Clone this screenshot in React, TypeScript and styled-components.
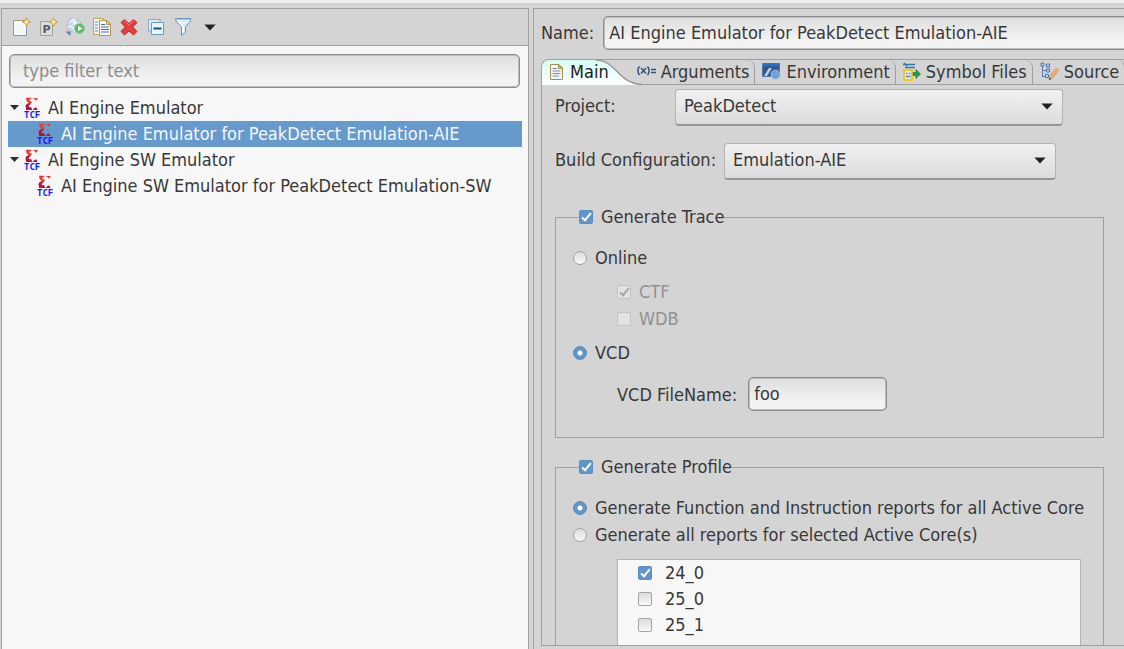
import React from "react";
import styled, { createGlobalStyle, css } from "styled-components";

const FONT = '"DejaVu Sans Condensed", "DejaVu Sans", "Liberation Sans", sans-serif';
const LINE = "#a0a0a0";
const FACE = "#d4d4d4";
const INK = "#383838";

const GlobalStyle = createGlobalStyle`
  *, *::before, *::after { box-sizing: border-box; }
  body { margin: 0; background: ${FACE}; }
  body, button, input, select { font-family: ${FONT}; font-size: 18px; color: ${INK}; }
`;

const Shell = styled.div`
  height: 100vh;
  overflow: hidden;
  display: grid;
  grid-template-columns: 528fr 591fr;
  gap: 4px;
  padding: 5px 0 0 1px;
  border-top: 3px solid #efefef;
  background: ${FACE};
`;

const LeftPane = styled.aside`
  display: flex;
  flex-direction: column;
  min-width: 0;
  background: #f7f7f7;
  border: 1px solid ${LINE};
  border-bottom: 0;
`;

const Toolbar = styled.div`
  display: flex;
  align-items: center;
  height: 37px;
  padding-left: 5px;
  background: ${FACE};
  border-bottom: 1px solid ${LINE};
`;

const ToolButton = styled.button`
  display: flex;
  align-items: center;
  justify-content: center;
  width: 27px;
  height: 28px;
  padding: 0;
  border: 0;
  background: none;
`;

const TextField = styled.input`
  height: 34px;
  min-width: 0;
  padding: 0 5px 1px;
  border: 1px solid #8c8c8c;
  border-radius: 5px;
  background: linear-gradient(#dedede, #f3f3f3 75%);
  box-shadow: inset 0 0 0 1px #bdbdbd;
  outline: 0;
`;

const FilterField = styled(TextField)`
  margin: 8px 8px 7px 7px;
  padding: 0 13px 2px;
  &::placeholder { color: #8c8c8c; opacity: 1; }
`;

const Tree = styled.ul`
  margin: 0 6px;
  padding: 0;
  list-style: none;
`;

const TreeRow = styled.li<{ $child?: boolean; $selected?: boolean }>`
  display: flex;
  align-items: center;
  height: 26px;
  padding-bottom: 1px;
  padding-left: ${(p) => (p.$child ? 29 : 1)}px;
  white-space: nowrap;
  ${(p) => p.$selected && css`background: #6699cc; color: #f4f8fc;`}
`;

const Twisty = styled.svg`
  width: 11px;
  height: 7px;
  margin-right: 4px;
  flex: none;
`;

const TreeIcon = styled.svg`
  width: 18px;
  height: 21px;
  margin-right: 6px;
  flex: none;
`;

const RightPane = styled.main`
  display: flex;
  flex-direction: column;
  min-width: 0;
  overflow: hidden;
  padding: 7px 0 3px 7px;
  border: 1px solid ${LINE};
  border-width: 1px 0 0 1px;
`;

const NameRow = styled.div`
  display: flex;
  align-items: center;
  gap: 9px;
  margin-bottom: 9px;
  label { flex: none; padding-bottom: 2px; }
  input { flex: 1; margin-right: -8px; }
`;

const Folder = styled.section`
  display: flex;
  flex-direction: column;
  flex: 1;
  min-height: 0;
  border: 1px solid ${LINE};
  border-right: 0;
  border-radius: 8px 0 0 0;
  overflow: hidden;
`;

const Tabs = styled.div`
  display: flex;
  flex: none;
  height: 25px;
  border-bottom: 1px solid ${LINE};
`;

const Tab = styled.button<{ $active?: boolean }>`
  position: relative;
  display: flex;
  flex: none;
  align-items: center;
  gap: 5px;
  height: 24px;
  padding: 0 5px 2px 7px;
  border: 0;
  border-right: 1px solid ${LINE};
  border-radius: 0 8px 0 0;
  background: none;
  white-space: nowrap;
  ${(p) =>
    p.$active &&
    css`
      gap: 6px;
      height: 25px;
      padding-right: 20px;
      border: 0;
      color: #1c1c1c;
      background: linear-gradient(#d6fdf5, #ffffff);
    `}
  & > svg { position: relative; flex: none; }
  & > span { position: relative; }
`;

const CurveBox = styled.div`
  position: absolute;
  top: 0;
  right: -13px;
  width: 46px;
  height: 25px;
  svg { display: block; }
`;

const TabBody = styled.div`
  flex: 1;
  min-height: 0;
  overflow: hidden;
  padding: 4px 20px 0 13px;
`;

const FieldRow = styled.div`
  display: flex;
  align-items: center;
  margin-bottom: 17px;
`;

const FieldLabel = styled.label<{ $wide?: boolean }>`
  flex: none;
  width: ${(p) => (p.$wide ? 169 : 120)}px;
  padding-bottom: 4px;
  white-space: nowrap;
`;

const SelectBox = styled.div<{ $basis: number }>`
  position: relative;
  flex: 0 1 ${(p) => p.$basis}px;
  min-width: 0;
  svg { position: absolute; right: 10px; top: 14px; pointer-events: none; }
`;

const Select = styled.select`
  appearance: none;
  display: block;
  width: 100%;
  height: 37px;
  padding: 0 30px 4px 8px;
  border: 1px solid #b4b4b4;
  border-bottom: 2px solid #969696;
  border-radius: 4px;
  background: linear-gradient(#f1f1f1, #dcdcdc);
  outline: 0;
`;

const Groups = styled.div`
  display: flex;
  flex-direction: column;
  gap: 18px;
  padding-top: 9px;
`;

const Group = styled.fieldset`
  min-width: 0;
  margin: 0;
  padding: 19px 22px 26px 17px;
  border: 1px solid ${LINE};
`;

const Legend = styled.legend`
  margin-left: 6px;
  padding: 0;
`;

const Option = styled.label<{ $indent?: boolean; $disabled?: boolean }>`
  display: flex;
  align-items: center;
  gap: 8px;
  height: 22px;
  padding-bottom: 1px;
  margin-left: ${(p) => (p.$indent ? 44 : 0)}px;
  white-space: nowrap;
  ${(p) => p.$disabled && css`color: #919191;`}
`;

const OptionStack = styled.div<{ $space?: number }>`
  display: flex;
  flex-direction: column;
  gap: 5px;
  margin-bottom: ${(p) => p.$space ?? 0}px;
`;

const markBase = css`
  appearance: none;
  position: relative;
  flex: none;
  width: 14px;
  height: 14px;
  margin: 0;
  border: 1px solid #a3a3a3;
  background: linear-gradient(#dcdcdc, #f8f8f8);
`;

const Check = styled.input.attrs({ type: "checkbox" })`
  ${markBase}
  border-radius: 2px;
  &:checked { border-color: #5a8cbf; background: #6296cb; }
  &:disabled { border-color: #c4c4c4; background: #e2e2e2; }
  &:checked::after {
    content: "";
    position: absolute;
    left: 4px;
    top: 0;
    width: 5px;
    height: 10px;
    border: solid #ffffff;
    border-width: 0 2px 2px 0;
    transform: rotate(40deg);
  }
  &:checked:disabled::after { border-color: #a6a6a6; }
`;

const Radio = styled.input.attrs({ type: "radio" })`
  ${markBase}
  border-radius: 50%;
  &:checked {
    border-color: #5a8cbf;
    background: radial-gradient(circle, #ffffff 0 2px, #6296cb 3px);
  }
`;

const FileRow = styled.div`
  display: flex;
  align-items: center;
  gap: 11px;
  margin: 13px 0 0 44px;
  label { white-space: nowrap; }
  input { flex: 0 1 139px; }
`;

const CoreList = styled.div`
  height: 150px;
  margin: 13px 0 0 44px;
  background: #f7f7f7;
  border: 1px solid #b4b4b4;
`;

const CoreRow = styled.label`
  display: flex;
  align-items: center;
  gap: 13px;
  height: 26px;
  padding-bottom: 1px;
  padding-left: 20px;
`;

const DownArrow = () => (
  <svg width="12" height="7" viewBox="0 0 12 7" aria-hidden="true">
    <path d="M0.3 0.5H11.7L6 6.5Z" fill="#222" />
  </svg>
);

const Expanded = () => (
  <Twisty viewBox="0 0 11 7" aria-hidden="true">
    <path d="M1 1H10L5.5 6Z" fill="#2c2c2c" />
  </Twisty>
);

const TcfIcon = () => (
  <TreeIcon viewBox="0 0 18 21" aria-hidden="true">
    <path d="M2 0.7H7.2V2.4H5L5.4 3.6L8 5L7 6.8L4.6 6L2.4 3.6Z" fill="#ee3a2c" />
    <path d="M4.6 6L7 6.8L4.6 8.8L5 10.2L7 10L8.4 13H2V11L1.4 9.6L2.2 7.6Z" fill="#b8123c" />
    <path d="M8.3 0.9H13.4V2.2L12 3.8L10.6 2Z" fill="#ee3a2c" />
    <path d="M8.6 13L11 10.6L12.6 10.8L13.4 13Z" fill="#b8123c" />
    <text x="0" y="20.5" fontFamily="DejaVu Sans Mono, monospace" fontSize="9" fontWeight="700" fill="#1414ff">TCF</text>
  </TreeIcon>
);

const Sparkle = () => (
  <path d="M15.5 0.8L16.8 3.7L19.6 5L16.8 6.3L15.5 9.2L14.2 6.3L11.4 5L14.2 3.7Z" fill="#f8edb0" stroke="#c6a13c" />
);

const NewIcon = () => (
  <svg width="20" height="20" viewBox="0 0 20 20" aria-hidden="true">
    <path d="M2.5 3.5H15.5V18.5H2.5Z" fill="#f4f8fd" stroke="#b39b62" />
    <path d="M3 18.5H15.5V10" fill="none" stroke="#8a93a8" />
    <Sparkle />
  </svg>
);

const PrototypeIcon = () => (
  <svg width="20" height="20" viewBox="0 0 20 20" aria-hidden="true">
    <path d="M2.5 4.5H14.5V18.5H2.5Z" fill="#dadde0" stroke="#a5a18f" />
    <text x="4.5" y="16" fontFamily="DejaVu Sans, sans-serif" fontSize="11" fontWeight="700" fill="#565a60">P</text>
    <Sparkle />
  </svg>
);

const ExportIcon = () => (
  <svg width="20" height="20" viewBox="0 0 20 20" aria-hidden="true">
    <circle cx="9" cy="8" r="7" fill="#ccd6e6" stroke="#a9b5cf" strokeDasharray="3 1" />
    <path d="M4 6Q8 2 10 5T15 6M3 10Q6 8 8 11T9 15M9 1V8" stroke="#f1f4f8" strokeWidth="1.6" fill="none" />
    <circle cx="14.5" cy="11.5" r="5" fill="#5dbb6c" stroke="#8bcf93" />
    <path d="M13 8.8V14.2L17.3 11.5Z" fill="#fff" />
    <path d="M0.5 14.5H5.5V19Z" fill="#5c7fb0" />
  </svg>
);

const CopyIcon = () => (
  <svg width="20" height="20" viewBox="0 0 20 20" aria-hidden="true">
    <path d="M1.5 1.5H11.5V17.5H1.5Z" fill="#f5f6f4" stroke="#c2a55c" />
    <path d="M3 5H6M3 8H6M3 11H6M3 14H6" stroke="#5e80b5" />
    <path d="M7.5 3.5H15L18.5 7V18.5H7.5Z" fill="#f8fafd" stroke="#b5964a" />
    <path d="M14.5 3.5V7.5H18.5Z" fill="#ecd79a" stroke="#b5964a" />
    <path d="M9 7.5H13M9 10H17M9 12.5H17M9 15H17" stroke="#4b6fae" strokeWidth="1.2" />
  </svg>
);

const DeleteIcon = () => (
  <svg width="20" height="20" viewBox="0 0 20 20" aria-hidden="true">
    <path d="M5.5 2.5L10 6.5L14.5 2.5L18 5.5L13.8 10L18 14.5L14.5 18L10 14L5.5 18L2 14.5L6.2 10L2 5.5Z" fill="#e23f40" stroke="#c9292e" strokeLinejoin="round" />
    <path d="M5.5 4L10 8L14.5 4" stroke="#f07c78" fill="none" />
  </svg>
);

const CollapseIcon = () => (
  <svg width="20" height="20" viewBox="0 0 20 20" aria-hidden="true">
    <path d="M2.5 2.5H14V14H2.5Z" fill="#dcebf8" stroke="#86abd2" />
    <path d="M5.5 5.5H17.5V17.5H5.5Z" fill="#eaf6fd" stroke="#6f9ac6" />
    <path d="M7.5 11.5H15.5" stroke="#184a86" strokeWidth="2" />
  </svg>
);

const FilterIcon = () => (
  <svg width="20" height="20" viewBox="0 0 20 20" aria-hidden="true">
    <path d="M2.5 1.5H18L17.5 4L12.5 10V15L8.5 18.5V10L3 4Z" fill="#dcecf8" stroke="#6e94bd" />
    <path d="M5 3.5L10 9.5V15" stroke="#fff" strokeWidth="1.5" fill="none" />
    <path d="M3 2.5H17.5" stroke="#a9c8e2" />
  </svg>
);

const PageIcon = () => (
  <svg width="15" height="18" viewBox="0 0 15 18" aria-hidden="true">
    <path d="M1.5 1.5H10L13.5 5V16.5H1.5Z" fill="#f3f7fc" stroke="#b08d3e" />
    <path d="M9.5 1.5V5.5H13.5Z" fill="#e7bd62" stroke="#b08d3e" />
    <path d="M3.5 5.5H8M3.5 8H11.5M3.5 10.5H11.5M3.5 13H10" stroke="#7390c0" />
  </svg>
);

const ArgumentsIcon = () => (
  <svg width="20" height="18" viewBox="0 0 20 18" aria-hidden="true">
    <path d="M3.5 4.5Q0.2 8.5 3.5 13M11.5 4.5Q14.8 8.5 11.5 13M5 6L10 11.5M10 6L5 11.5M15 7.5H20M15 10.5H20" fill="none" stroke="#31507f" strokeWidth="1.5" />
  </svg>
);

const EnvironmentIcon = () => (
  <svg width="19" height="18" viewBox="0 0 19 18" aria-hidden="true">
    <path d="M0.5 1.5H17.5V14.5H0.5Z" fill="#34588e" stroke="#5378aa" />
    <path d="M1 2.8H17" stroke="#2671c6" strokeWidth="3" />
    <path d="M2 14L7 6H10L5 14Z" fill="#b9cde4" />
    <circle cx="13.5" cy="12.5" r="4.5" fill="#6da2df" stroke="#8fb7e6" />
  </svg>
);

const SymbolIcon = () => (
  <svg width="18" height="19" viewBox="0 0 18 19" aria-hidden="true">
    <path d="M0 2.5H12M2 5.5H12M1 1L4 4" stroke="#2a78b4" strokeWidth="1.5" />
    <path d="M1 8H9V18H1Z" fill="#dfe9f4" stroke="#f2ca1d" strokeWidth="2" />
    <path d="M3 11.5H4.5M6 11.5H7.5M3 14.5H7.5" stroke="#5f85b5" strokeWidth="1.5" />
    <path d="M10 10.5H13V7.5L17.5 12L13 16.5V13.5H10Z" fill="#259a45" stroke="#1c6e38" strokeWidth="0.6" />
  </svg>
);

const SourceIcon = () => (
  <svg width="19" height="19" viewBox="0 0 19 19" aria-hidden="true">
    <path d="M2.5 3V14.5H7M2.5 8.5H6" stroke="#5778ae" fill="none" />
    <path d="M1 1H4V4H1ZM6.5 2H9.5V5H6.5ZM6.5 7H9.5V10H6.5ZM5.5 12.5H8.5V15.5H5.5Z" fill="#c9d9ee" stroke="#4a70ad" />
    <path d="M9 18L10 14L16 6.5L18.5 8.5L12.5 16Z" fill="#f0b36b" stroke="#c68a4c" strokeWidth="0.8" />
    <path d="M9 18L9.6 15.6L11.2 17Z" fill="#444" />
  </svg>
);

const Curve = () => (
  <CurveBox>
    <svg width="46" height="25" viewBox="0 0 46 25" aria-hidden="true">
      <path d="M0 25H46V24.5C22 24 20 0 2 0H0Z" fill="url(#tab)" />
      <path d="M2 0C20 0 22 24 46 24.5V0Z" fill={FACE} />
      <path d="M0 0C20 0 22 24 46 24.5" fill="none" stroke="#949494" strokeWidth="1.3" />
      <defs>
        <linearGradient id="tab" x1="0" y1="0" x2="0" y2="1">
          <stop offset="0" stopColor="#d6fdf5" />
          <stop offset="1" stopColor="#ffffff" />
        </linearGradient>
      </defs>
    </svg>
  </CurveBox>
);

const tools: [string, React.ReactNode][] = [
  ["New launch configuration", <NewIcon />],
  ["New prototype", <PrototypeIcon />],
  ["Export", <ExportIcon />],
  ["Duplicate", <CopyIcon />],
  ["Delete", <DeleteIcon />],
  ["Collapse all", <CollapseIcon />],
  ["Filter", <FilterIcon />],
  ["Filter menu", <DownArrow />],
];

const tabs: [string, React.ReactNode][] = [
  ["Arguments", <ArgumentsIcon />],
  ["Environment", <EnvironmentIcon />],
  ["Symbol Files", <SymbolIcon />],
  ["Source", <SourceIcon />],
];

const cores = ["24_0", "25_0", "25_1"];

export default function App() {
  return (
    <>
      <GlobalStyle />
      <Shell>
        <LeftPane>
          <Toolbar>
            {tools.map(([label, icon]) => (
              <ToolButton key={label} aria-label={label}>{icon}</ToolButton>
            ))}
          </Toolbar>
          <FilterField aria-label="Filter" placeholder="type filter text" />
          <Tree>
            <TreeRow><Expanded /><TcfIcon />AI Engine Emulator</TreeRow>
            <TreeRow $child $selected><TcfIcon />AI Engine Emulator for PeakDetect Emulation-AIE</TreeRow>
            <TreeRow><Expanded /><TcfIcon />AI Engine SW Emulator</TreeRow>
            <TreeRow $child><TcfIcon />AI Engine SW Emulator for PeakDetect Emulation-SW</TreeRow>
          </Tree>
        </LeftPane>
        <RightPane>
          <NameRow>
            <label htmlFor="name">Name:</label>
            <TextField id="name" defaultValue="AI Engine Emulator for PeakDetect Emulation-AIE" />
          </NameRow>
          <Folder>
            <Tabs role="tablist">
              <Tab role="tab" aria-selected="true" $active>
                <Curve />
                <PageIcon />
                <span>Main</span>
              </Tab>
              {tabs.map(([label, icon]) => (
                <Tab key={label} role="tab" aria-selected="false">{icon}<span>{label}</span></Tab>
              ))}
            </Tabs>
            <TabBody>
              <FieldRow>
                <FieldLabel htmlFor="project">Project:</FieldLabel>
                <SelectBox $basis={388}>
                  <Select id="project"><option>PeakDetect</option></Select>
                  <DownArrow />
                </SelectBox>
              </FieldRow>
              <FieldRow>
                <FieldLabel $wide htmlFor="build">Build Configuration:</FieldLabel>
                <SelectBox $basis={332}>
                  <Select id="build"><option>Emulation-AIE</option></Select>
                  <DownArrow />
                </SelectBox>
              </FieldRow>
              <Groups>
                <Group>
                  <Legend><Option><Check defaultChecked />Generate Trace</Option></Legend>
                  <OptionStack $space={12}>
                    <Option><Radio name="trace" />Online</Option>
                  </OptionStack>
                  <OptionStack $space={12}>
                    <Option $indent $disabled><Check defaultChecked disabled />CTF</Option>
                    <Option $indent $disabled><Check disabled />WDB</Option>
                  </OptionStack>
                  <Option><Radio name="trace" defaultChecked />VCD</Option>
                  <FileRow>
                    <label htmlFor="vcd">VCD FileName:</label>
                    <TextField id="vcd" defaultValue="foo" />
                  </FileRow>
                </Group>
                <Group>
                  <Legend><Option><Check defaultChecked />Generate Profile</Option></Legend>
                  <OptionStack>
                    <Option><Radio name="profile" defaultChecked />Generate Function and Instruction reports for all Active Core</Option>
                    <Option><Radio name="profile" />Generate all reports for selected Active Core(s)</Option>
                  </OptionStack>
                  <CoreList>
                    {cores.map((core, i) => (
                      <CoreRow key={core}><Check defaultChecked={i === 0} />{core}</CoreRow>
                    ))}
                  </CoreList>
                </Group>
              </Groups>
            </TabBody>
          </Folder>
        </RightPane>
      </Shell>
    </>
  );
}
